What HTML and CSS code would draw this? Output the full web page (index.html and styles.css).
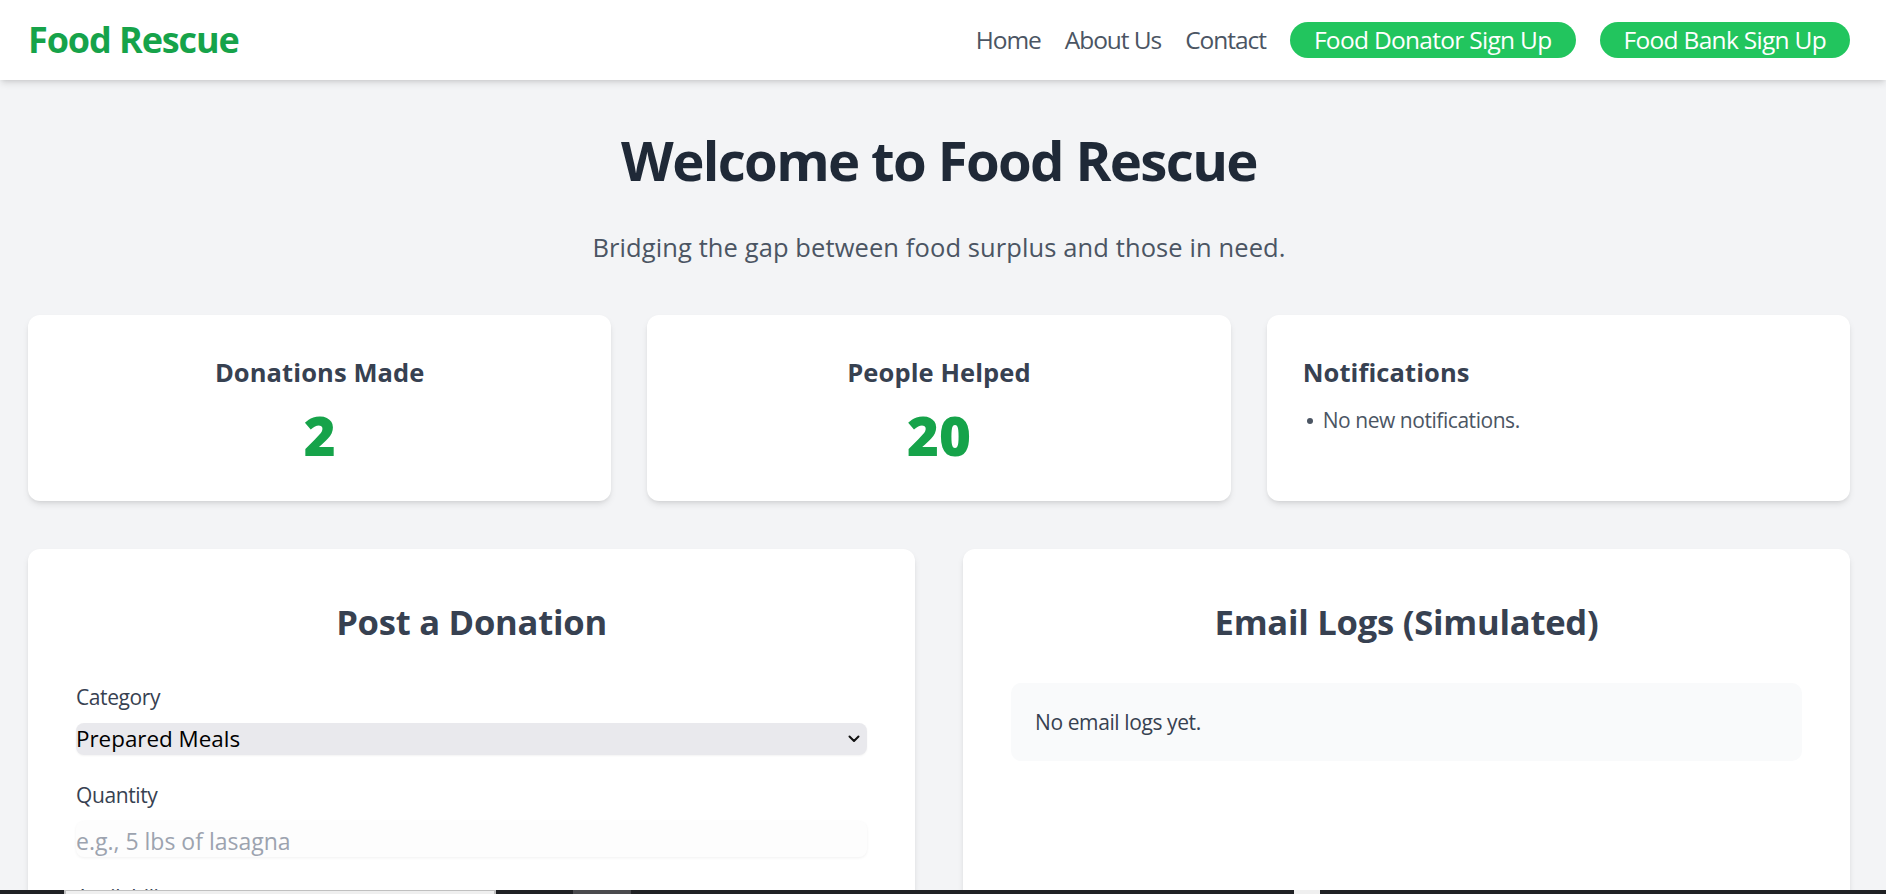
FILE: index.html
```html
<!DOCTYPE html>
<html lang="en">
<head>
<meta charset="utf-8">
<title>Food Rescue</title>
<link rel="stylesheet" href="styles.css">
</head>
<body>
<header class="site-header">
  <a class="logo" href="#">Food Rescue</a>
  <nav class="nav">
    <a class="nav-link" href="#">Home</a>
    <a class="nav-link" href="#">About Us</a>
    <a class="nav-link" href="#">Contact</a>
    <a class="btn-pill" href="#">Food Donator Sign Up</a>
    <a class="btn-pill" href="#">Food Bank Sign Up</a>
  </nav>
</header>

<main class="page">
  <section class="hero">
    <h1 class="hero-title">Welcome to Food Rescue</h1>
    <p class="hero-sub">Bridging the gap between food surplus and those in need.</p>
  </section>

  <section class="stats">
    <div class="card stat-card">
      <h3 class="card-title">Donations Made</h3>
      <p class="stat-value">2</p>
    </div>
    <div class="card stat-card">
      <h3 class="card-title">People Helped</h3>
      <p class="stat-value">20</p>
    </div>
    <div class="card notif-card">
      <h3 class="card-title">Notifications</h3>
      <ul class="notif-list">
        <li>No new notifications.</li>
      </ul>
    </div>
  </section>

  <section class="panels">
    <div class="card panel">
      <h2 class="panel-title">Post a Donation</h2>
      <form class="form">
        <div class="field">
          <label class="label" for="category">Category</label>
          <div class="select-wrap">
            <select id="category" class="select">
              <option>Prepared Meals</option>
              <option>Produce</option>
              <option>Bakery</option>
              <option>Canned Goods</option>
            </select>
            <svg class="chevron" width="12" height="8" viewBox="0 0 12 8"><path d="M1.5 1.5 L6 6 L10.5 1.5" fill="none" stroke="#111" stroke-width="2" stroke-linecap="round" stroke-linejoin="round"/></svg>
          </div>
        </div>
        <div class="field">
          <label class="label" for="quantity">Quantity</label>
          <input id="quantity" class="input" type="text" placeholder="e.g., 5 lbs of lasagna">
        </div>
        <div class="field">
          <label class="label" for="availability">Availability</label>
          <input id="availability" class="input" type="text" placeholder="e.g., Today until 6 PM">
        </div>
        <div class="field">
          <label class="label" for="location">Pickup Location</label>
          <input id="location" class="input" type="text" placeholder="e.g., 123 Main St">
        </div>
      </form>
    </div>
    <div class="card panel">
      <h2 class="panel-title">Email Logs (Simulated)</h2>
      <div class="log-box">No email logs yet.</div>
    </div>
  </section>
</main>

<div class="taskbar-strip">
  <span class="seg dark" style="width:64px"></span>
  <span class="seg light" style="width:432px"></span>
  <span class="seg dark" style="width:77px"></span>
  <span class="seg mid" style="width:58px"></span>
  <span class="seg dark" style="width:663px"></span>
  <span class="seg pale" style="width:26px"></span>
  <span class="seg dark grow"></span>
</div>
</body>
</html>
```

FILE: styles.css
```css
* {
  box-sizing: border-box;
}

html, body {
  margin: 0;
  padding: 0;
}

body {
  background: #f3f4f6;
  font-family: "Open Sans", "Noto Sans", sans-serif;
  color: #374151;
}

a {
  text-decoration: none;
}

/* Header */
.site-header {
  height: 80px;
  background: #ffffff;
  display: flex;
  align-items: center;
  justify-content: space-between;
  padding: 0 36px 0 28px;
  box-shadow: 0 4px 7px -1px rgba(0, 0, 0, 0.12), 0 2px 4px -2px rgba(0, 0, 0, 0.1);
  position: relative;
  z-index: 1;
}

.logo {
  font-size: 36px;
  font-weight: 700;
  color: #16a34a;
  line-height: 1;
  letter-spacing: -1.1px;
}

.nav {
  display: flex;
  align-items: center;
  gap: 24px;
}

.nav-link {
  font-size: 24.5px;
  color: #4b5563;
  line-height: 36px;
  letter-spacing: -1.05px;
}

.btn-pill {
  display: block;
  height: 36px;
  line-height: 36px;
  padding: 0 24px;
  margin-top: 0;
  border-radius: 999px;
  background: #22c55e;
  color: #ffffff;
  font-size: 24.5px;
  letter-spacing: -0.7px;
}

/* Page */
.page {
  padding: 0 36px 60px 28px;
}

.hero {
  padding-top: 48px;
  text-align: center;
}

.hero-title {
  margin: 0;
  font-size: 54.5px;
  line-height: 64px;
  font-weight: 700;
  color: #1f2937;
  letter-spacing: -1.65px;
}

.hero-sub {
  margin: 38px 0 0;
  font-size: 25.5px;
  line-height: 34px;
  color: #4b5563;
  letter-spacing: 0.1px;
}

/* Cards */
.card {
  background: #ffffff;
  border-radius: 12px;
  box-shadow: 0 4px 7px -1px rgba(0, 0, 0, 0.1), 0 2px 4px -2px rgba(0, 0, 0, 0.1);
}

.stats {
  margin-top: 51px;
  display: grid;
  grid-template-columns: repeat(3, 1fr);
  gap: 36px;
}

.stat-card,
.notif-card {
  padding: 40px 36px 38px;
}

.stat-card {
  text-align: center;
}

.card-title {
  margin: 0;
  font-size: 25.5px;
  line-height: 35px;
  font-weight: 700;
  color: #374151;
  letter-spacing: 0.1px;
}

.stat-value {
  margin: 18px 0 0;
  font-size: 54.6px;
  line-height: 1;
  font-weight: 800;
  color: #16a34a;
}

.notif-list {
  margin: 14px 0 0;
  padding: 0;
  list-style: none;
  font-size: 21px;
  line-height: 32px;
  color: #4b5563;
  letter-spacing: -0.45px;
}

.notif-list li::before {
  content: "";
  display: inline-block;
  width: 6px;
  height: 6px;
  border-radius: 50%;
  background: #4b5563;
  margin: 0 10px 0 4px;
  vertical-align: middle;
  position: relative;
  top: -1px;
}

/* Panels */
.panels {
  margin-top: 48px;
  display: grid;
  grid-template-columns: 1fr 1fr;
  gap: 48px;
}

.panel {
  padding: 52px 48px 48px;
}

.panel-title {
  margin: 0 0 40px;
  font-size: 34.6px;
  line-height: 42px;
  font-weight: 700;
  color: #374151;
  text-align: center;
  letter-spacing: -0.25px;
}

.field {
  margin-bottom: 26px;
}

.label {
  display: block;
  font-size: 21px;
  line-height: 28px;
  color: #374151;
  margin-bottom: 12px;
  letter-spacing: -0.4px;
}

.select-wrap {
  position: relative;
}

.select {
  display: block;
  width: 100%;
  height: 32px;
  padding: 0;
  border: none;
  border-radius: 8px;
  background: #e9e9ed;
  font-family: inherit;
  font-size: 22.4px;
  color: #000000;
  letter-spacing: 0;
  appearance: none;
  -webkit-appearance: none;
  box-shadow: 0 1px 2px rgba(0, 0, 0, 0.05);
}

.chevron {
  position: absolute;
  right: 7px;
  top: 12px;
  pointer-events: none;
}

.input {
  display: block;
  width: 100%;
  height: 36px;
  padding: 5px 0 0;
  border: none;
  border-radius: 8px;
  background: #fdfdfd;
  font-family: inherit;
  font-size: 23px;
  color: #111827;
  letter-spacing: 0;
  box-shadow: 0 1px 3px rgba(0, 0, 0, 0.06);
}

.input::placeholder {
  color: #9ca3af;
}

.log-box {
  background: #f9fafb;
  border-radius: 10px;
  padding: 25px 24px;
  font-size: 21px;
  line-height: 28px;
  color: #374151;
  letter-spacing: -0.4px;
}

/* Bottom strip from the captured screen */
.taskbar-strip {
  position: fixed;
  left: 0;
  right: 0;
  bottom: 0;
  height: 4px;
  display: flex;
  z-index: 5;
}

.seg {
  display: block;
  height: 4px;
  flex: none;
}

.seg.grow {
  flex: 1;
}

.seg.dark {
  background: #202124;
}

.seg.light {
  background: #efefef;
  border-top: 1px solid #c0c0c0;
  border-left: 2px solid #c0c0c0;
  border-right: 2px solid #c0c0c0;
}

.seg.mid {
  background: #4a4a4d;
}

.seg.pale {
  background: #efefef;
}
```
